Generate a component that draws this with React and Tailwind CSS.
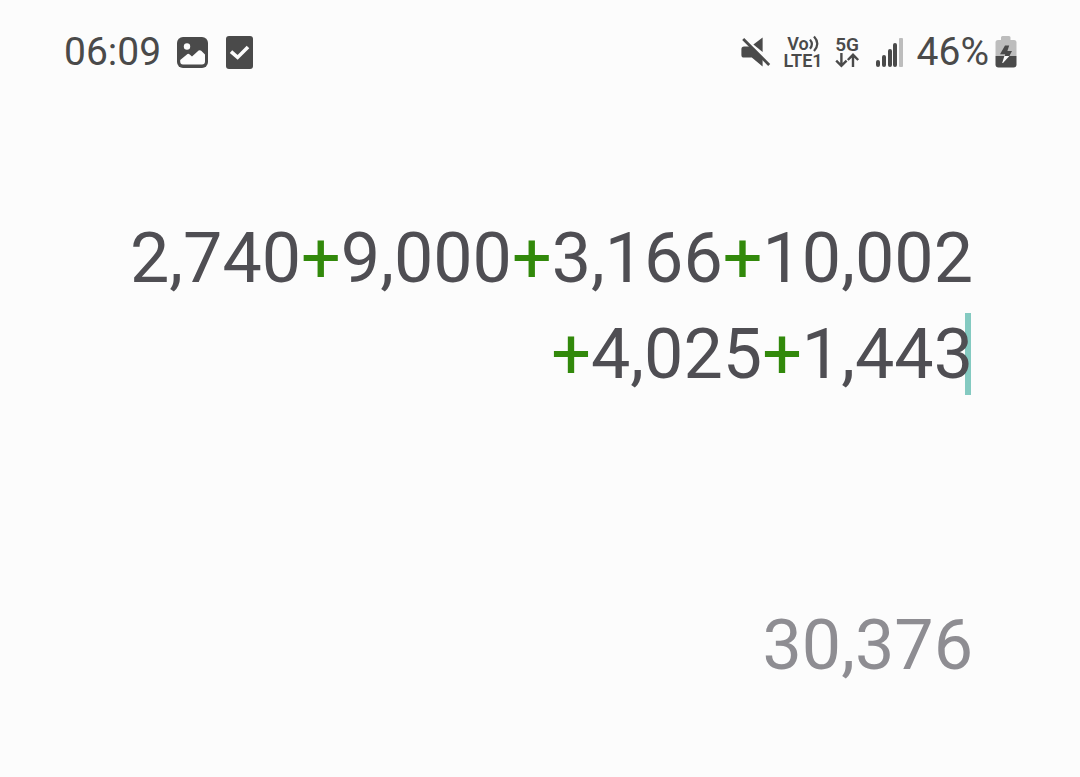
function ImageIcon() {
  return (
    <svg width="31" height="31" viewBox="0 0 31 31" aria-hidden="true">
      <rect width="31" height="31" rx="6" fill="#4a4a4a" />
      <circle cx="10" cy="9.5" r="3.2" fill="#fcfcfc" />
      <path d="M3.2 23 L10.5 17 Q11.5 16.3 12.4 17.2 L15 19.6 L21.6 13.6 Q23 12.6 24.2 13.8 L28 17.6 V24.5 Q28 27.5 25 27.5 H6 Q3.2 27.5 3.2 24.5 Z" fill="#fcfcfc" />
    </svg>
  );
}

function TaskIcon() {
  return (
    <svg width="27" height="33" viewBox="0 0 27 33" aria-hidden="true">
      <rect width="27" height="33" rx="3" fill="#4a4a4a" />
      <path d="M5 15.6 L11.6 21.4 L22 11" fill="none" stroke="#fcfcfc" strokeWidth="3.6" />
    </svg>
  );
}

function MuteIcon() {
  return (
    <svg width="30" height="31" viewBox="0 0 30 31" aria-hidden="true">
      <path d="M21.6 0.6 V15 L12.4 7.6 Z" fill="#4a4a4a" />
      <path d="M3 9.6 H10 L21.6 21.2 V29.6 L10.8 20.6 H3 Q0.4 20.6 0.4 18 V12.2 Q0.4 9.6 3 9.6 Z" fill="#4a4a4a" />
      <path d="M2.2 2 L28.2 28" stroke="#4a4a4a" strokeWidth="2.8" />
    </svg>
  );
}

function WavesIcon() {
  return (
    <svg width="10" height="17" viewBox="0 0 10 17" fill="none" stroke="#4a4a4a" strokeWidth="2.2" aria-hidden="true">
      <path d="M1 4.6 Q4.8 9 1 13.8" />
      <path d="M5 1.6 Q11.6 8.8 5 16" />
    </svg>
  );
}

function DataArrowsIcon() {
  return (
    <svg width="25" height="15" viewBox="0 0 25 15" fill="none" stroke="#4a4a4a" strokeWidth="2.4" aria-hidden="true">
      <path d="M6.4 0 V13 M1.2 7.6 L6.4 12.8 L11.6 7.6" />
      <path d="M18 14 V2 M12.8 7 L18 1.8 L23.2 7" />
    </svg>
  );
}

function SignalIcon() {
  return (
    <svg width="27" height="29" viewBox="0 0 27 29" role="img" aria-label="Signal strength">
      <rect x="0" y="22" width="4" height="7" rx="2" fill="#4a4a4a" />
      <rect x="6" y="17" width="4" height="12" rx="2" fill="#4a4a4a" />
      <rect x="12" y="11" width="4" height="18" rx="2" fill="#4a4a4a" />
      <rect x="17" y="5" width="4" height="24" rx="2" fill="#4a4a4a" />
      <rect x="23" y="0" width="4" height="29" rx="1" fill="#bdbdbd" />
    </svg>
  );
}

function BatteryIcon() {
  return (
    <svg width="22" height="32" viewBox="0 0 22 32" role="img" aria-label="Battery charging">
      <path d="M6 3 V1.5 Q6 0 7.5 0 H14 Q15.5 0 15.5 1.5 V4 H19 Q21.5 4 21.5 6.5 V20 H0.5 V6.5 Q0.5 4 3 4 H6 Z" fill="#bdbdbd" />
      <path d="M0.5 20 H21.5 V28.5 Q21.5 31.5 18.5 31.5 H3.5 Q0.5 31.5 0.5 28.5 Z" fill="#4a4a4a" />
      <path d="M10 9.5 H14.2 L12.4 15 H17 L14.4 20 H9.8 L10.2 18.2 H5 Z" fill="#4a4a4a" />
      <path d="M9.4 20 H14.4 L8 27 H7.2 Z" fill="#fcfcfc" />
    </svg>
  );
}

function StatusBar() {
  return (
    <header className="flex h-[104px] items-center justify-between pr-[63px] pl-16 text-[#4a4a4a]">
      <div className="flex items-center">
        <time className="mr-4 text-[39px] leading-9">06:09</time>
        <ImageIcon />
        <span className="w-[18px]" />
        <TaskIcon />
      </div>
      <div className="flex items-center">
        <MuteIcon />
        <div className="ml-3 flex flex-col items-center text-[18px] leading-[17px] font-semibold">
          <span className="flex items-center">
            Vo
            <WavesIcon />
          </span>
          <span>LTE1</span>
        </div>
        <div className="mr-4 ml-3 flex flex-col items-center text-[19px] leading-[17px] font-semibold">
          <span>5G</span>
          <DataArrowsIcon />
        </div>
        <SignalIcon />
        <span className="mr-1.5 ml-3.5 text-[39px] leading-9">46%</span>
        <BatteryIcon />
      </div>
    </header>
  );
}

function Plus() {
  return <span className="text-[#32890b]">+</span>;
}

export default function App() {
  return (
    <div className="min-h-screen bg-[#fcfcfc] font-[Roboto,sans-serif]">
      <StatusBar />
      <main className="flex flex-col items-end pr-[107px] pl-16 text-[70px]">
        <div role="textbox" aria-label="Expression" aria-readonly="true" className="mt-[106px] text-right leading-24 text-[#4f4e53]">
          <div>
            2,740<Plus />9,000<Plus />3,166<Plus />10,002
          </div>
          <div className="relative isolate">
            <Plus />4,025<Plus />1,443
            <span className="absolute top-[7px] right-0.5 -z-10 h-[82px] w-1.5 bg-[#84cac1]" />
          </div>
        </div>
        <output aria-label="Result" className="mt-[195px] leading-24 text-[#8e8d92]">30,376</output>
      </main>
    </div>
  );
}
